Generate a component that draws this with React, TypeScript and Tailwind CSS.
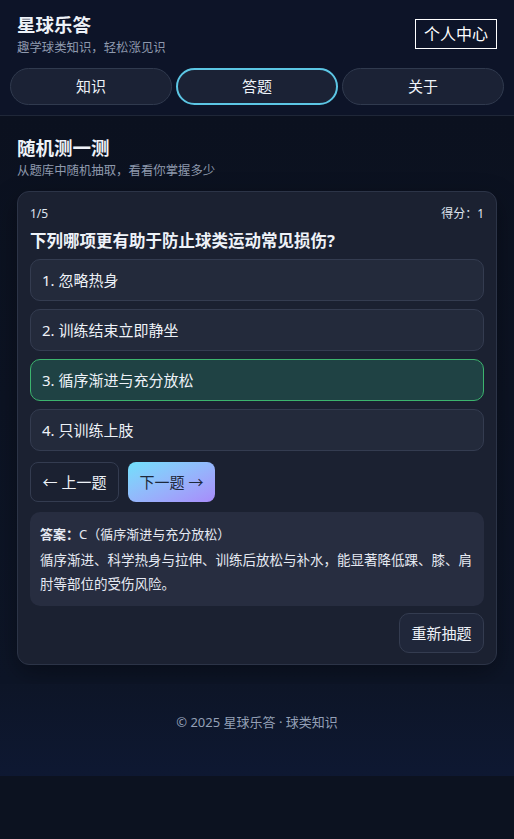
import React from "react";

const font = { fontFamily: '"Noto Sans", "Noto Sans CJK SC", sans-serif' };

export default function App() {
  const options = ["1. 忽略热身", "2. 训练结束立即静坐", "3. 循序渐进与充分放松", "4. 只训练上肢"];
  return (
    <div className="min-h-screen bg-[#0c1220] text-[#e5e9f2]" style={font}>
      <header className="bg-[#0d1428] border-b border-[#1f2738]">
        <div className="flex items-start justify-between px-[17px] pt-[13px]">
          <div>
            <h1 className="text-[18.5px] font-bold leading-[24px] text-[#eef2f8]">星球乐答</h1>
            <p className="text-[12.4px] leading-[18px] text-[#8e99ad] mt-[2px]">趣学球类知识，轻松涨见识</p>
          </div>
          <button className="mt-[6px] h-[30px] w-[82px] border border-white text-[16px] text-white leading-none">个人中心</button>
        </div>
        <nav className="grid grid-cols-3 gap-[4px] px-[10px] pt-[11px] pb-[10px]">
          <button className="h-[37px] rounded-full border border-[#303a4e] bg-[#1b2235] text-[15px] text-[#eef2f8]">知识</button>
          <button className="h-[37px] rounded-full border-2 border-[#5cc6e4] bg-[#1b2235] text-[15px] text-[#eef2f8]">答题</button>
          <button className="h-[37px] rounded-full border border-[#303a4e] bg-[#1b2235] text-[15px] text-[#eef2f8]">关于</button>
        </nav>
      </header>

      <main className="bg-gradient-to-b from-[#0b111f] to-[#0d1527] px-[17px] pt-[19px] pb-[19px]">
        <h2 className="text-[18.5px] font-bold leading-[26px] text-[#eef2f8]">随机测一测</h2>
        <p className="text-[12.4px] leading-[18px] text-[#8e99ad] mt-[1px]">从题库中随机抽取，看看你掌握多少</p>

        <section className="mt-[11px] rounded-[12px] border border-[#2c3447] bg-[#1b2131] px-[12px] pt-[13px] pb-[11px] shadow-[0_8px_24px_rgba(0,0,0,0.35)]">
          <div className="flex justify-between text-[12px] leading-[18px] text-[#dfe4ee]">
            <span>1/5</span>
            <span>得分：1</span>
          </div>
          <h3 className="mt-[7px] text-[16.5px] font-bold leading-[22px] text-[#eef2f8]">下列哪项更有助于防止球类运动常见损伤?</h3>
          <div className="mt-[7px] flex flex-col gap-[8px]">
            {options.map((o, i) => (
              <div
                key={o}
                className={
                  i === 2
                    ? "h-[42px] flex items-center rounded-[10px] border border-[#3cb46e] bg-[#1f4244] px-[11px] text-[15px] text-[#eef2f8]"
                    : "h-[42px] flex items-center rounded-[10px] border border-[#343c50] bg-[#232a3b] px-[11px] text-[15px] text-[#eef2f8]"
                }
              >
                {o}
              </div>
            ))}
          </div>
          <div className="mt-[11px] flex gap-[9px]">
            <button className="h-[40px] w-[89px] rounded-[8px] border border-[#343c50] bg-[#1b2131] text-[15px] text-[#eef2f8]">← 上一题</button>
            <button className="h-[40px] w-[87px] rounded-[8px] bg-gradient-to-br from-[#6ee0fb] to-[#a78bfa] text-[15px] text-[#1e293b]">下一题 →</button>
          </div>
          <div className="mt-[10px] rounded-[10px] bg-[#272d40] px-[10px] pt-[10px] pb-[10px]">
            <p className="text-[13px] leading-[24px] text-[#e5e9f2]"><span className="font-bold">答案：</span>C（循序渐进与充分放松）</p>
            <p className="mt-[2px] text-[13.5px] leading-[24px] text-[#e5e9f2]">循序渐进、科学热身与拉伸、训练后放松与补水，能显著降低踝、膝、肩肘等部位的受伤风险。</p>
          </div>
          <div className="mt-[7px] flex justify-end">
            <button className="h-[40px] w-[85px] rounded-[10px] border border-[#343c50] bg-[#20273a] text-[15px] text-[#eef2f8]">重新抽题</button>
          </div>
        </section>
      </main>

      <footer className="bg-gradient-to-b from-[#0d1527] to-[#0e1832] h-[92px] flex items-start justify-center pt-[29px]">
        <p className="text-[13px] leading-[18px] text-[#94a0b6]">© 2025 星球乐答 · 球类知识</p>
      </footer>
    </div>
  );
}
